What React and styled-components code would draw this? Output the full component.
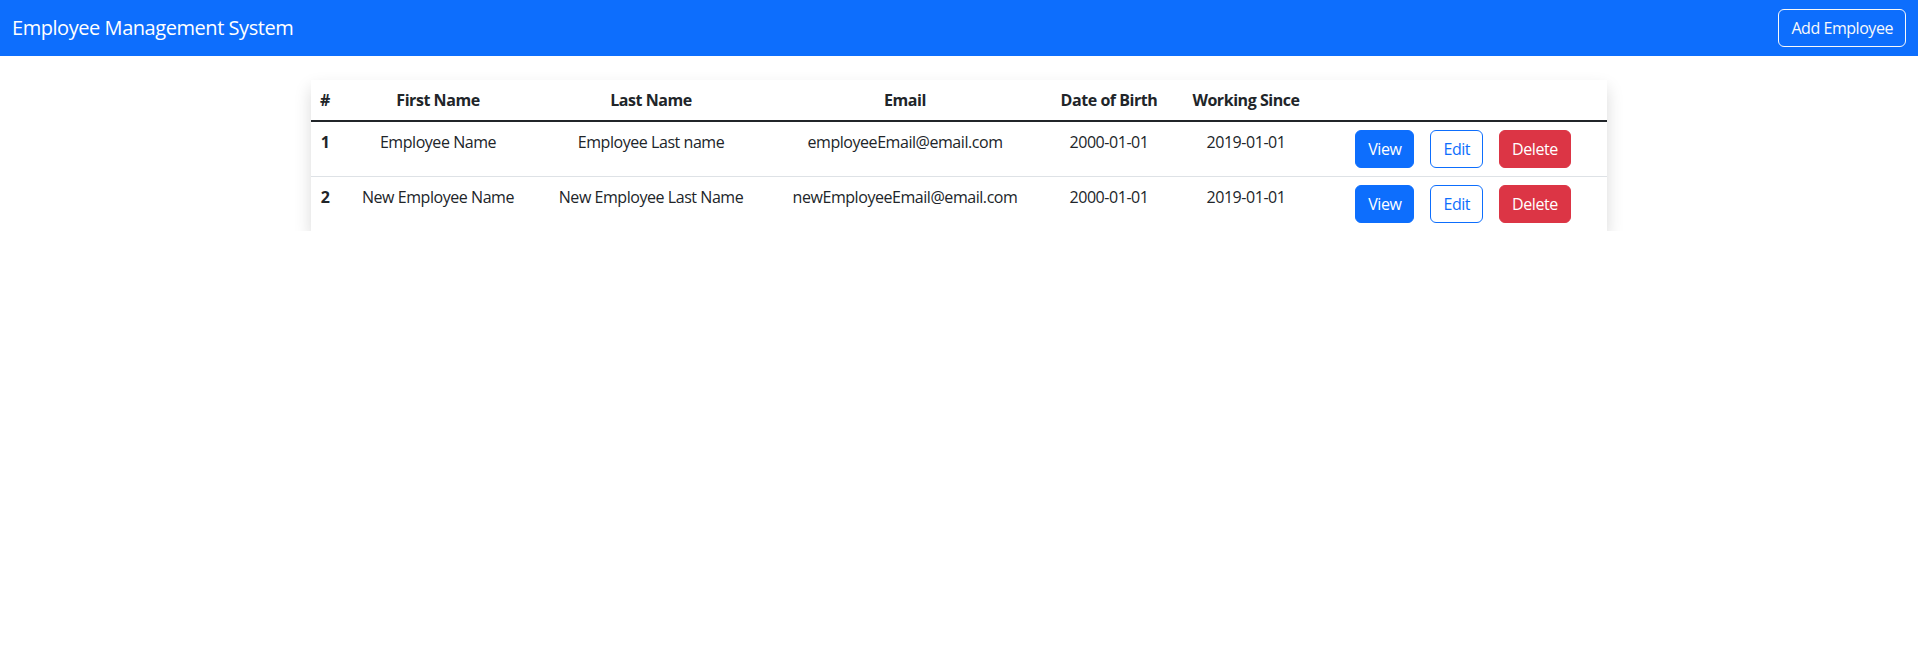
import React from "react";
import styled, { createGlobalStyle } from "styled-components";

const employees = [
  {
    id: 1,
    firstName: "Employee Name",
    lastName: "Employee Last name",
    email: "employeeEmail@email.com",
    dob: "2000-01-01",
    since: "2019-01-01",
  },
  {
    id: 2,
    firstName: "New Employee Name",
    lastName: "New Employee Last Name",
    email: "newEmployeeEmail@email.com",
    dob: "2000-01-01",
    since: "2019-01-01",
  },
];

const columns = [
  { label: "#", width: 28 },
  { label: "First Name", width: 198 },
  { label: "Last Name", width: 228 },
  { label: "Email", width: 280 },
  { label: "Date of Birth", width: 128 },
  { label: "Working Since", width: 146 },
  { label: "", width: 288 },
];

export default function App() {
  return (
    <>
      <GlobalStyle />
      <Navbar>
        <Brand>Employee Management System</Brand>
        <NavButton>Add Employee</NavButton>
      </Navbar>
      <Container>
        <Table>
          <colgroup>
            {columns.map((c, i) => (
              <col key={i} style={{ width: c.width }} />
            ))}
          </colgroup>
          <thead>
            <tr>
              {columns.map((c, i) => (
                <Th key={i}>{c.label}</Th>
              ))}
            </tr>
          </thead>
          <Tbody>
            {employees.map((e) => (
              <Row key={e.id}>
                <Td $bold>{e.id}</Td>
                <Td>{e.firstName}</Td>
                <Td>{e.lastName}</Td>
                <Td>{e.email}</Td>
                <Td>{e.dob}</Td>
                <Td>{e.since}</Td>
                <Td>
                  <Actions>
                    <Button $variant="primary">View</Button>
                    <Button $variant="outline">Edit</Button>
                    <Button $variant="danger">Delete</Button>
                  </Actions>
                </Td>
              </Row>
            ))}
          </Tbody>
        </Table>
      </Container>
    </>
  );
}

const GlobalStyle = createGlobalStyle`
  * { box-sizing: border-box; }
  body {
    margin: 0;
    background: #fff;
    color: #212529;
    font-family: "Segoe UI", "Open Sans", "Noto Sans", sans-serif;
    font-size: 16px;
    line-height: 1.5;
    letter-spacing: -0.028em;
  }
`;

const Navbar = styled.nav`
  display: flex;
  align-items: center;
  justify-content: space-between;
  height: 56px;
  padding: 8px 12px;
  background: #0d6efd;
`;

const Brand = styled.span`
  color: #fff;
  font-size: 20px;
  line-height: 30px;
  padding: 5px 0;
`;

const NavButton = styled.button`
  font-family: inherit;
  letter-spacing: inherit;
  font-size: 16px;
  line-height: 24px;
  padding: 6px 12px;
  color: #f8f9fa;
  background: transparent;
  border: 1px solid #f8f9fa;
  border-radius: 6px;
  cursor: pointer;
`;

const Container = styled.div`
  max-width: 1320px;
  margin: 24px auto 0;
  padding: 0 12px;
`;

const Table = styled.table`
  width: 100%;
  table-layout: fixed;
  border-collapse: collapse;
  background: #fff;
  box-shadow: 0 8px 16px rgba(0, 0, 0, 0.15);
`;

const Th = styled.th`
  padding: 8px;
  text-align: center;
  font-weight: 700;
  border-bottom: 1px solid #dee2e6;
`;

const Tbody = styled.tbody`
  border-top: 2px solid #212529;
`;

const Row = styled.tr`
  border-bottom: 1px solid #dee2e6;
  &:last-child { border-bottom: none; }
`;

const Td = styled.td`
  padding: 8px;
  text-align: center;
  vertical-align: top;
  font-weight: ${(p) => (p.$bold ? 700 : 400)};
`;

const Actions = styled.div`
  display: flex;
  justify-content: center;
  gap: 16px;
`;

const variants = {
  primary: { bg: "#0d6efd", color: "#fff", border: "#0d6efd" },
  outline: { bg: "transparent", color: "#0d6efd", border: "#0d6efd" },
  danger: { bg: "#dc3545", color: "#fff", border: "#dc3545" },
};

const Button = styled.button`
  font-family: inherit;
  letter-spacing: inherit;
  font-size: 16px;
  line-height: 24px;
  padding: 6px 12px;
  border-radius: 6px;
  cursor: pointer;
  background: ${(p) => variants[p.$variant].bg};
  color: ${(p) => variants[p.$variant].color};
  border: 1px solid ${(p) => variants[p.$variant].border};
`;
